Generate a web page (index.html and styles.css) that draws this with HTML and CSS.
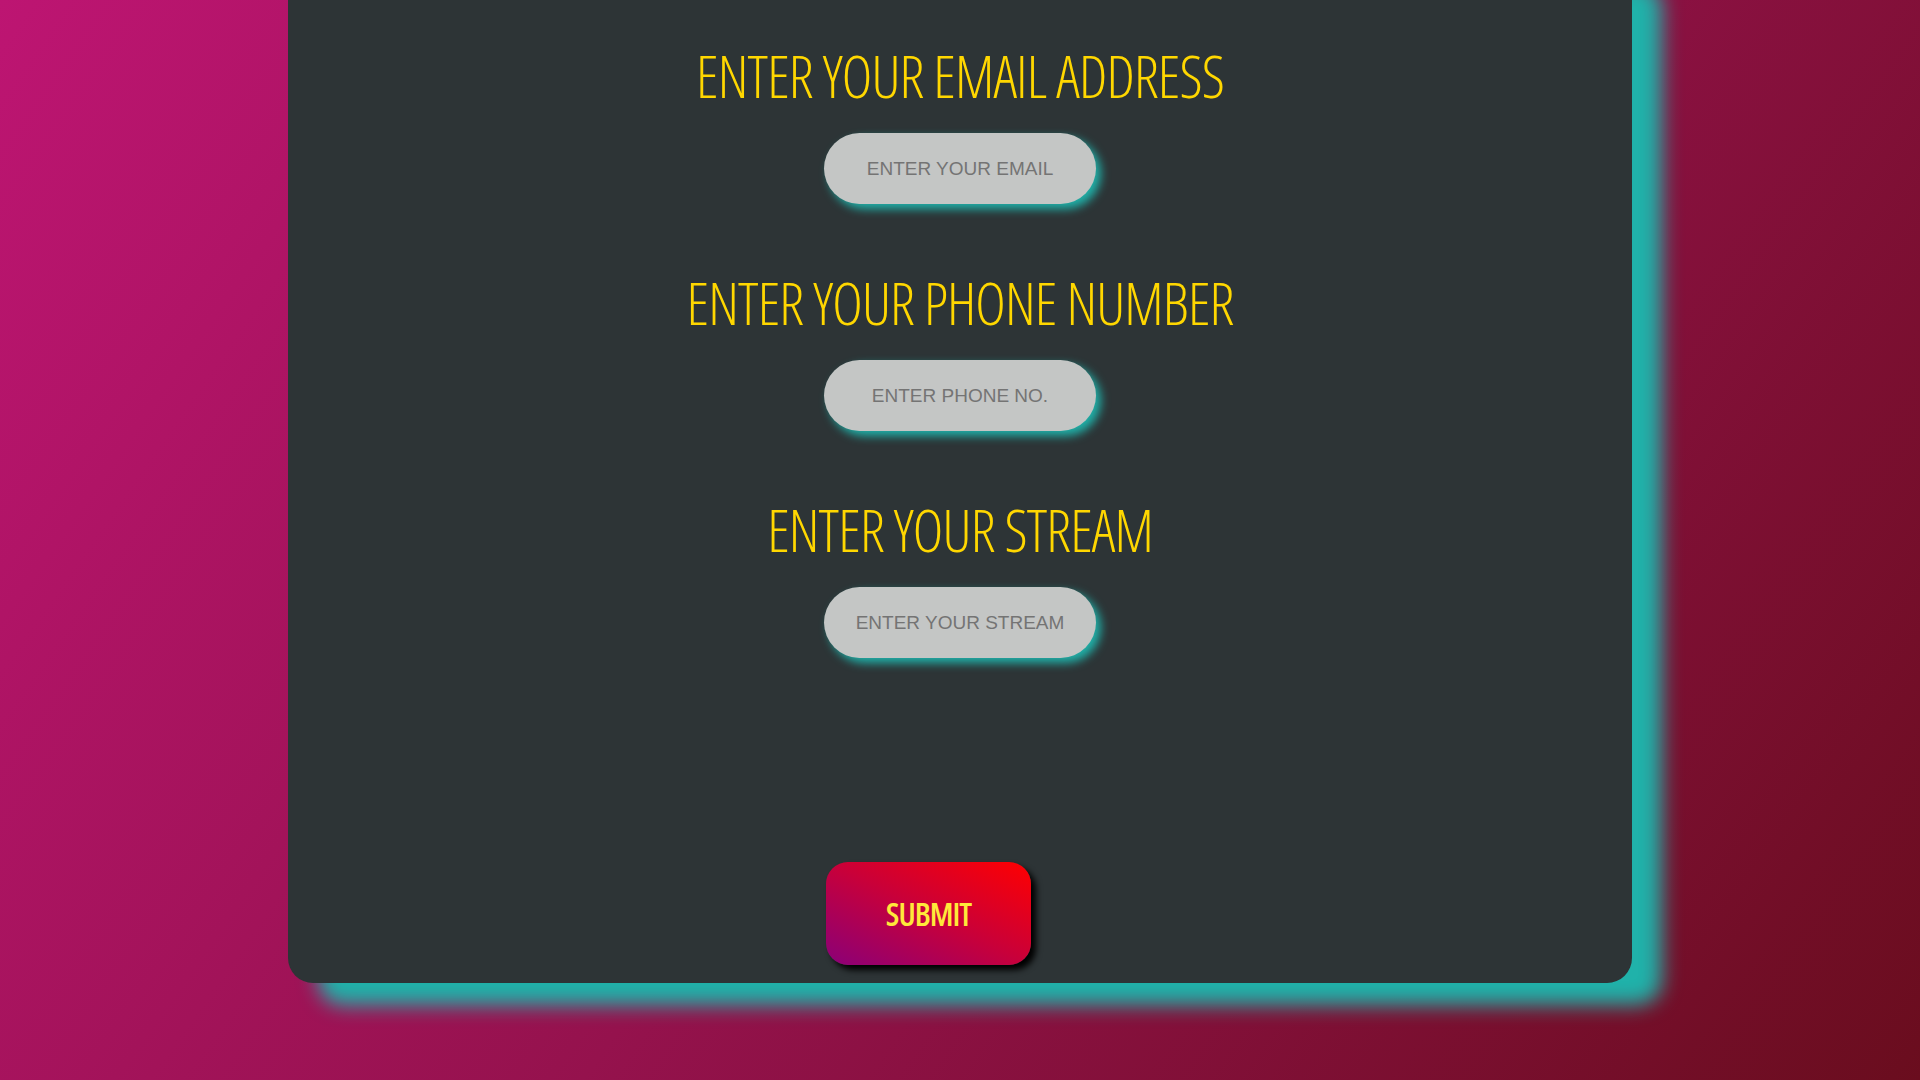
FILE: index.html
```html
<!DOCTYPE html>
<html lang="en">
<head>
<meta charset="utf-8">
<title>Form</title>
<link rel="stylesheet" href="styles.css">
</head>
<body>
<main class="card">
  <form class="form">
    <h2 class="label">ENTER YOUR EMAIL ADDRESS</h2>
    <input class="field" type="email" placeholder="ENTER YOUR EMAIL">
    <h2 class="label">ENTER YOUR PHONE NUMBER</h2>
    <input class="field" type="tel" placeholder="ENTER PHONE NO.">
    <h2 class="label">ENTER YOUR STREAM</h2>
    <input class="field" type="text" placeholder="ENTER YOUR STREAM">
    <div class="actions">
      <button class="submit" type="button">SUBMIT</button>
    </div>
  </form>
</main>
</body>
</html>
```

FILE: styles.css
```css
html, body {
  margin: 0;
  padding: 0;
  height: 100%;
}
body {
  background: linear-gradient(125deg, #bd1572 0%, #95124d 50%, #6a0d1e 100%);
  overflow: hidden;
  font-family: "Open Sans", "Liberation Sans", sans-serif;
}
.card {
  width: 1344px;
  height: 1023px;
  margin-top: -40px;
  margin-left: 288px;
  box-sizing: border-box;
  background: #2d3436;
  border-radius: 25px;
  box-shadow: 30px 22px 20px #20b2aa;
  padding-top: 75px;
}
.form {
  display: flex;
  flex-direction: column;
  align-items: center;
}
.label {
  margin: 0;
  font-family: "Open Sans", sans-serif;
  font-stretch: 75%;
  font-weight: 300;
  font-size: 58px;
  letter-spacing: -0.85px;
  line-height: 82px;
  color: #ffd700;
}
.field {
  margin-top: 16px;
  margin-bottom: 58px;
  width: 272px;
  height: 71px;
  box-sizing: border-box;
  border: none;
  outline: none;
  border-radius: 36px;
  background: #c4c6c5;
  box-shadow: 5px 5px 10px #20b2aa;
  text-align: center;
  font-family: "Liberation Sans", Arial, sans-serif;
  font-size: 19px;
}
.field::placeholder {
  color: #747474;
}
.form .field:last-of-type {
  margin-bottom: 0;
}
.actions {
  width: 272px;
  margin-top: 204px;
  padding-left: 2px;
  box-sizing: border-box;
}
.submit {
  width: 205px;
  height: 103px;
  border: none;
  border-radius: 22px;
  background: linear-gradient(to top right, #8a0078 0%, #c8003a 50%, #ff0000 100%);
  box-shadow: 5px 5px 6px #000;
  color: #ffe83a;
  font-family: "Open Sans", sans-serif;
  font-stretch: 75%;
  font-weight: 600;
  font-size: 32px;
  letter-spacing: -1px;
  cursor: pointer;
}
```
